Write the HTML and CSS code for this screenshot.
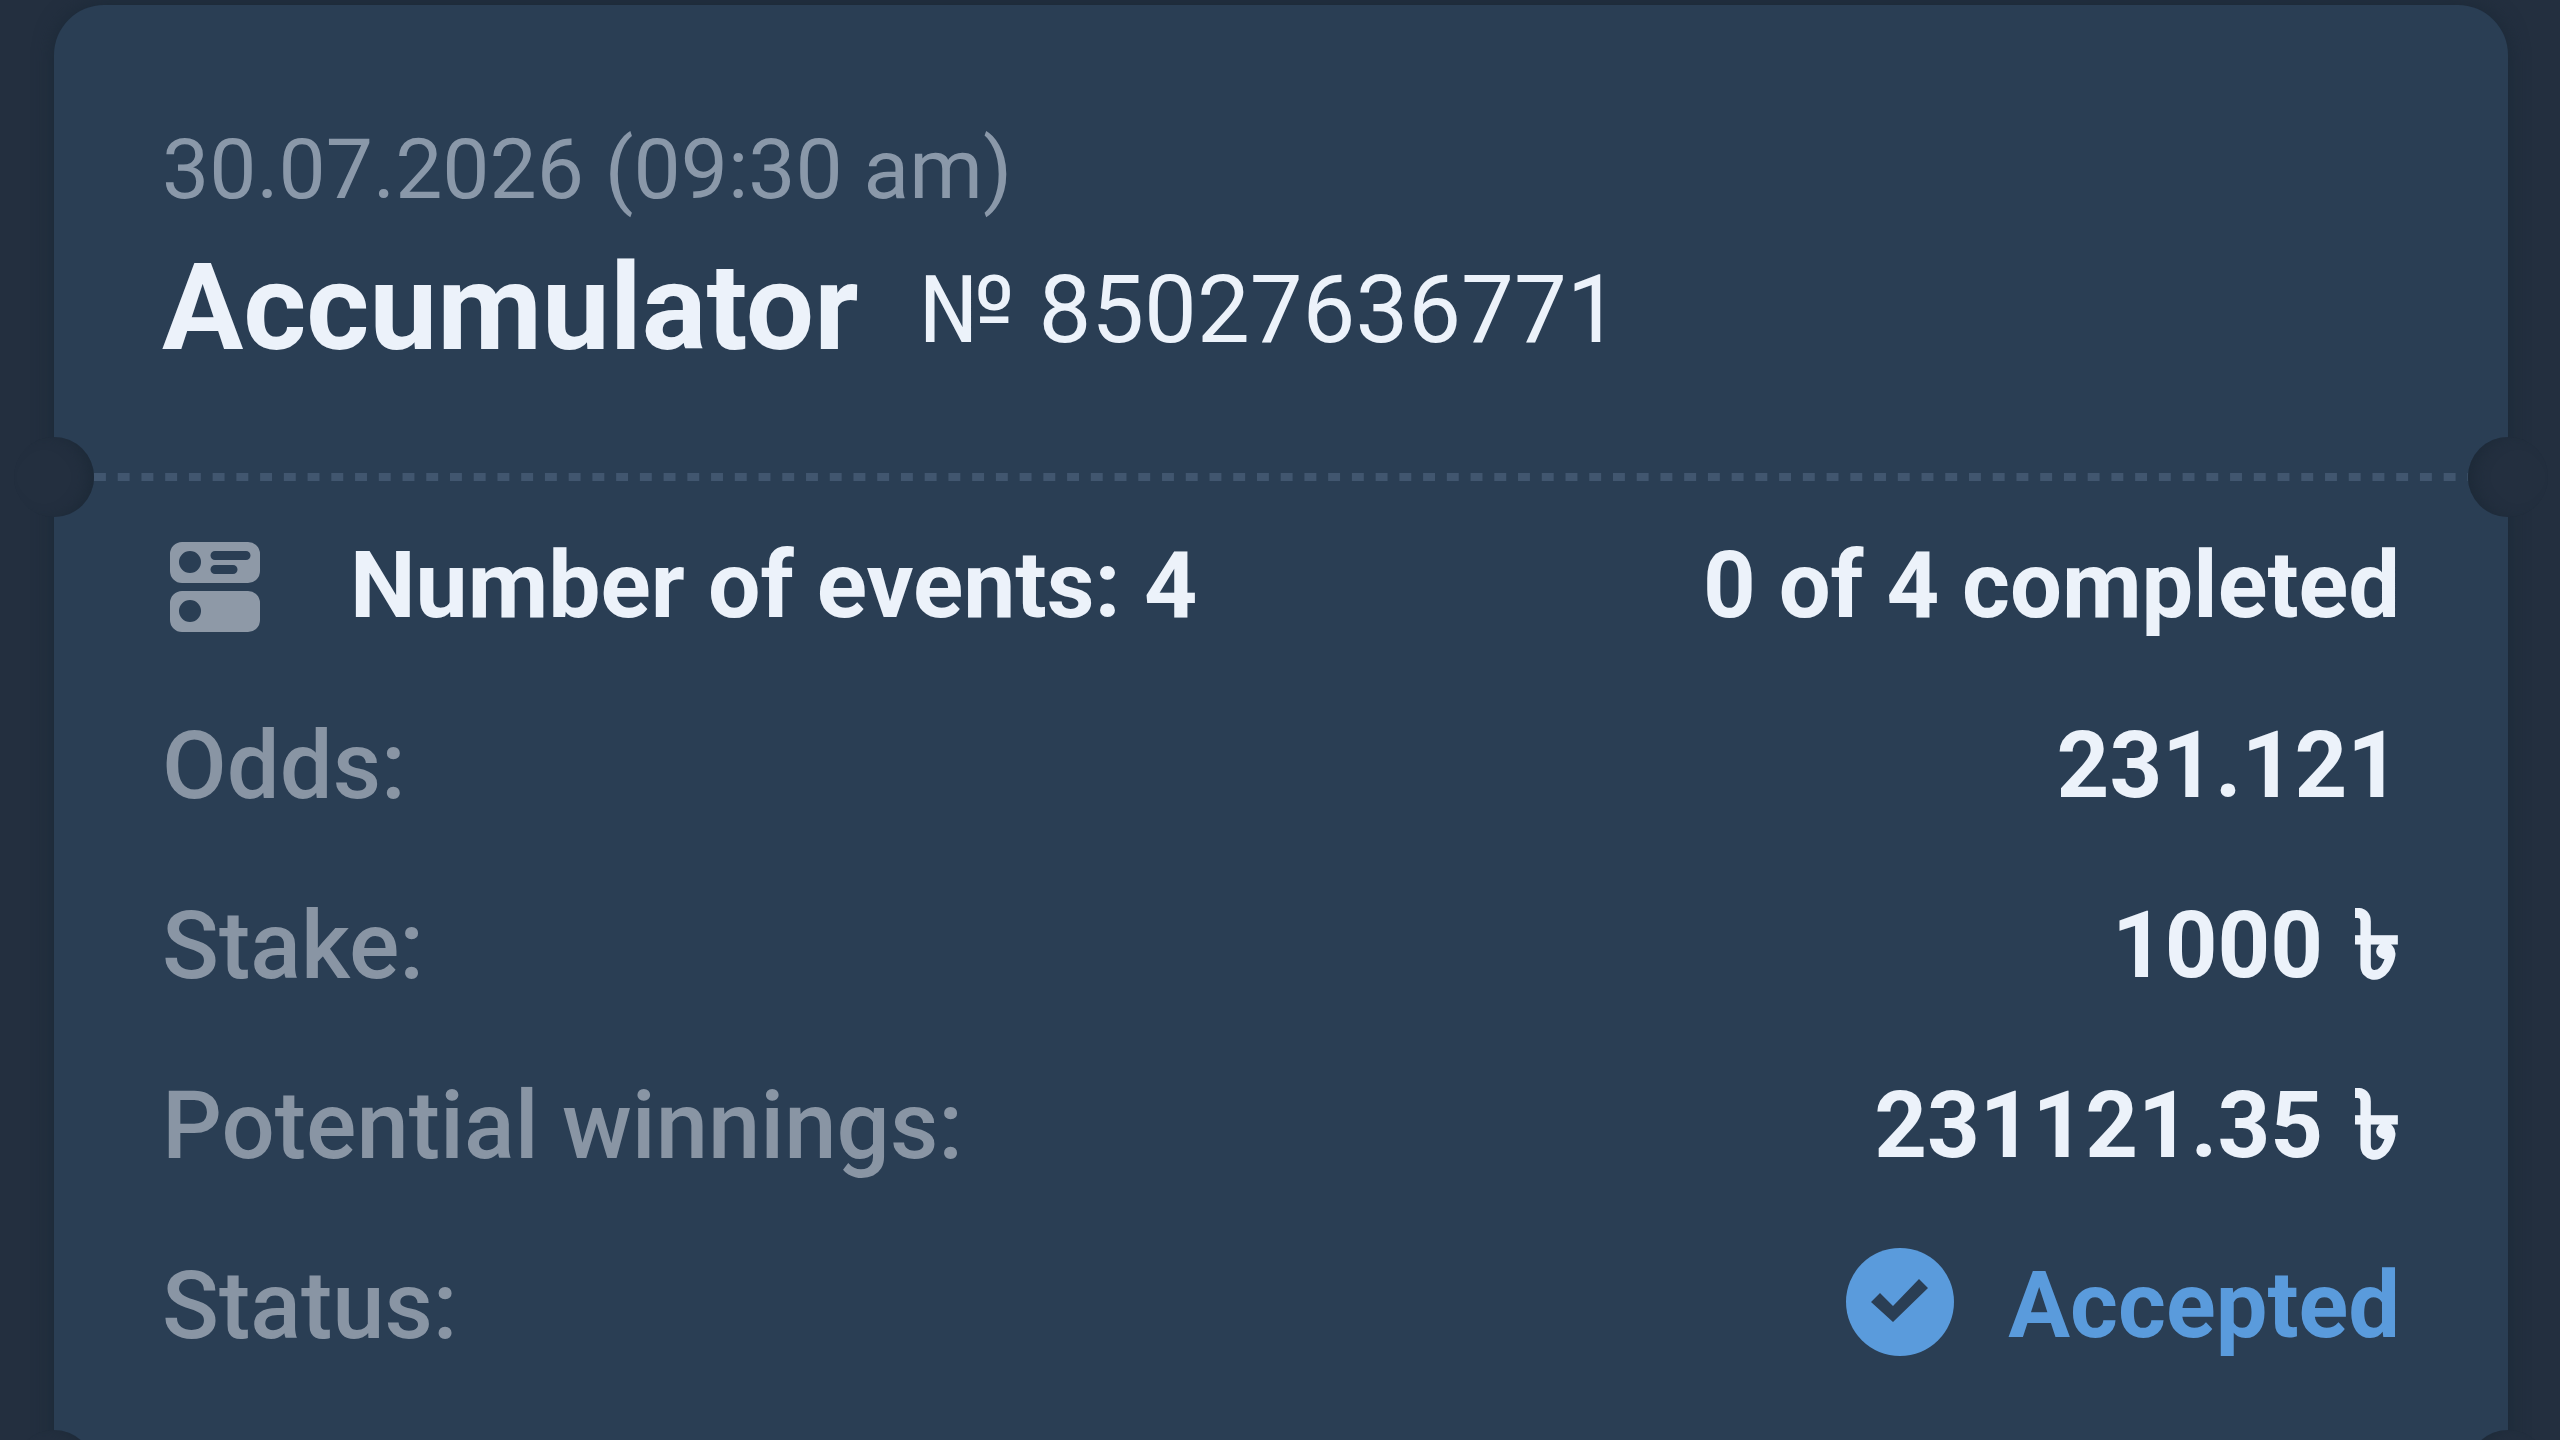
FILE: index.html
```
<!DOCTYPE html>
<html lang="en">

<head>
    <meta charset="UTF-8">
    <meta name="viewport" content="width=device-width, initial-scale=1.0">
    <title>Accumulator</title>
    <link rel="stylesheet" href="styles.css">
</head>

<body>
    <main class="coupon">
        <header class="coupon-head">
            <time class="date" datetime="2026-07-30T09:30">30.07.2026 (09:30 am)</time>
            <div class="title">
                <h1>Accumulator</h1>
                <span class="number">№ 85027636771</span>
            </div>
        </header>

        <!-- tear line with the two cut-outs -->
        <div class="tear"></div>

        <dl class="info">
            <div class="row row-events">
                <dt>
                    <svg class="icon" viewBox="0 -1 108 108" aria-hidden="true">
                        <path fill="#8e99a7" fill-rule="evenodd" d="M20 9H86A12 12 0 0 1 98 21V38A12 12 0 0 1 86 50H20A12 12 0 0 1 8 38V21A12 12 0 0 1 20 9ZM28 18A11 11 0 1 0 28 40A11 11 0 1 0 28 18ZM53 18A4 4 0 0 0 53 27H84A4 4 0 0 0 84 18ZM53 32A4 4 0 0 0 53 41H71A4 4 0 0 0 71 32ZM20 58H86A12 12 0 0 1 98 70V87A12 12 0 0 1 86 99H20A12 12 0 0 1 8 87V70A12 12 0 0 1 20 58ZM28 67A11 11 0 1 0 28 89A11 11 0 1 0 28 67Z" />
                    </svg>
                    <span>Number of events: 4</span>
                </dt>
                <dd>0 of 4 completed</dd>
            </div>
            <div class="row">
                <dt>Odds:</dt>
                <dd>231.121</dd>
            </div>
            <div class="row">
                <dt>Stake:</dt>
                <dd>1000 <span class="taka">৳</span></dd>
            </div>
            <div class="row">
                <dt>Potential winnings:</dt>
                <dd>231121.35 <span class="taka">৳</span></dd>
            </div>
            <div class="row">
                <dt>Status:</dt>
                <dd class="status">
                    <svg class="icon" viewBox="0 0 108 108" aria-hidden="true">
                        <circle cx="54" cy="54" r="54" fill="#5a9bdc" />
                        <path fill="#2a3e54" d="M25 54L34 45L47 58L73 31L82 40L47 74Z" />
                    </svg>
                    <span>Accepted</span>
                </dd>
            </div>
        </dl>

        <div class="tear"></div>
        <div class="coupon-foot"></div>
    </main>
</body>

</html>
```
FILE: styles.css
```
* {
    padding: 0;
    margin: 0;
    box-sizing: border-box;
}

body {
    height: 100vh;
    padding: 5px 52px 0 54px;
    overflow: hidden;
    background: #232f3f;
    color: #ecf2fa;
    font-family: Roboto, "Noto Sans", sans-serif;
    font-size: 94px;
    line-height: 120px;
}

.coupon {
    border-radius: 50px;
    background: #2a3e54;
    box-shadow: 0 0 20px #1b2937;
}

.coupon-head {
    padding: 101px 108px 91px;
}

.date {
    display: block;
    color: #8a98a9;
    font-size: 84px;
    line-height: 128px;
}

.title {
    display: flex;
    align-items: center;
    gap: 60px;
    line-height: 144px;
}

.title h1 {
    font-size: 121px;
    font-weight: 700;
}

.number {
    padding-top: 4px;
}

/* dashed line between the cut-outs */
.tear {
    position: relative;
    height: 8px;
    margin: 0 40px;
    background: linear-gradient(90deg, #41566f 50%, transparent 50%) 0 0 / 1% 100%;
}

.tear::before,
.tear::after {
    content: '';
    position: absolute;
    top: -36px;
    width: 80px;
    height: 80px;
    border-radius: 50%;
    background: #232f3f;
}

.tear::before {
    left: -80px;
    box-shadow: inset -10px 0 14px -4px #1d2a38;
}

.tear::after {
    right: -80px;
    box-shadow: inset 10px 0 14px -4px #1d2a38;
}

.info {
    display: grid;
    gap: 60px;
    padding: 45px 108px 100px;
}

.row {
    display: flex;
    align-items: center;
    justify-content: space-between;
}

.row dt {
    color: #8995a4;
    font-weight: 500;
}

.row dd {
    font-size: 92px;
    font-weight: 700;
}

.row-events dt,
.row .status {
    display: flex;
    align-items: center;
}

.row-events dt {
    gap: 80px;
    color: #ecf2fa;
    font-size: 93px;
    font-weight: 700;
}

.row .status {
    gap: 54px;
    color: #5a9bdc;
}

.icon {
    width: 108px;
    height: 108px;
}

.status .icon {
    margin-bottom: 8px;
}

/* the fallback glyph has no bold cut */
.taka {
    margin-left: 8px;
    -webkit-text-stroke: 2px;
}

.coupon-foot {
    height: 60px;
}
```
